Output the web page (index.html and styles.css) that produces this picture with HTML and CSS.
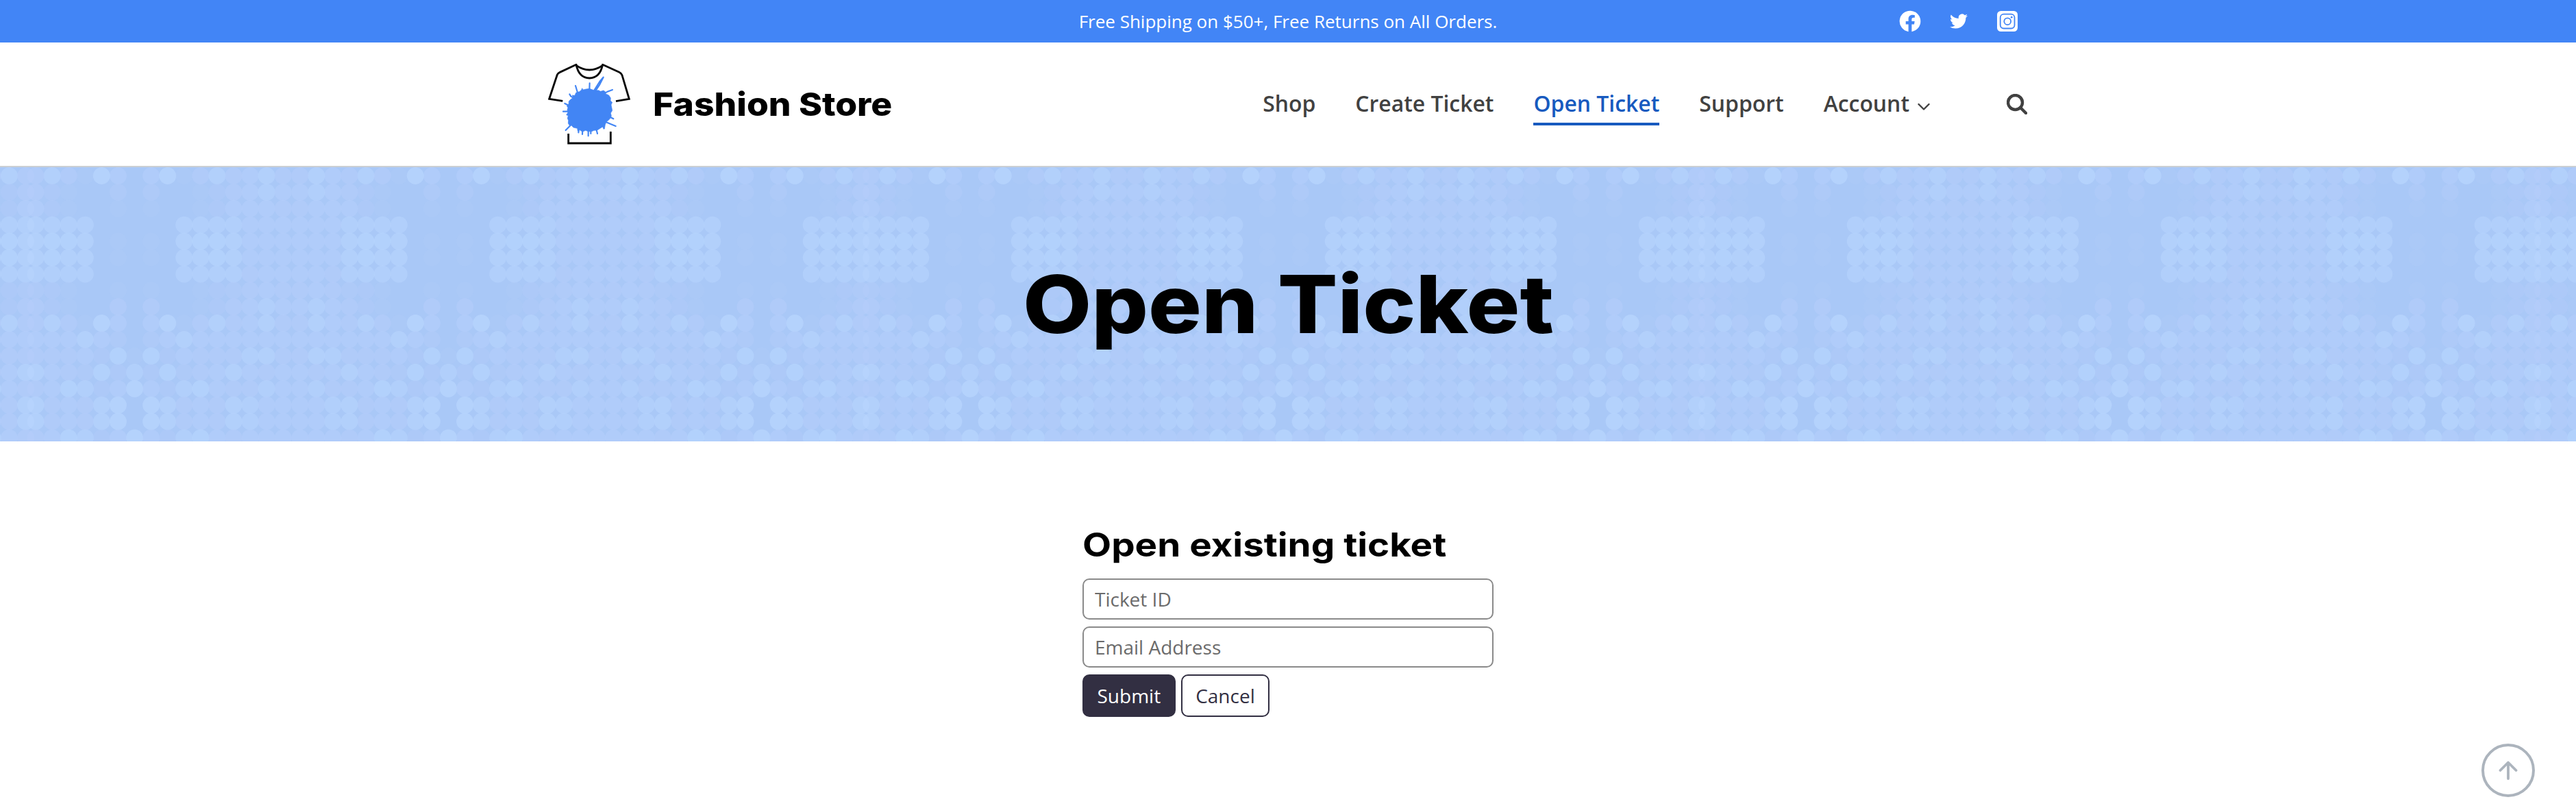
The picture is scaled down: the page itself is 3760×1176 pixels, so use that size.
FILE: index.html
```html
<!DOCTYPE html>
<html lang="en">
<head>
<meta charset="utf-8">
<title>Open Ticket – Fashion Store</title>
<link rel="stylesheet" href="styles.css">
</head>
<body>
<div class="topbar">
  <div class="container topbar-inner">
    <p class="promo">Free Shipping on $50+, Free Returns on All Orders.</p>
    <div class="social">
      <a class="social-link"><svg viewBox="0 0 24 24" width="32" height="32"><path d="M23.5 12a11.5 11.5 0 1 0-13.3 11.36v-8.04H7.28V12h2.92V9.47c0-2.88 1.72-4.48 4.34-4.48 1.26 0 2.58.23 2.58.23v2.83h-1.46c-1.43 0-1.88.89-1.88 1.8V12h3.2l-.5 3.32h-2.7v8.04A11.5 11.5 0 0 0 23.5 12z"/></svg></a>
      <a class="social-link"><svg viewBox="0 0 24 24" width="26" height="26"><path d="M24 4.56a9.8 9.8 0 0 1-2.83.78 4.94 4.94 0 0 0 2.17-2.73 9.9 9.9 0 0 1-3.13 1.2 4.92 4.92 0 0 0-8.38 4.48A13.97 13.97 0 0 1 1.67 3.15a4.92 4.92 0 0 0 1.52 6.57 4.9 4.9 0 0 1-2.23-.61v.06a4.93 4.93 0 0 0 3.95 4.83 4.9 4.9 0 0 1-2.22.08 4.93 4.93 0 0 0 4.6 3.42A9.87 9.87 0 0 1 0 19.54a13.94 13.94 0 0 0 7.55 2.21c9.05 0 14-7.5 14-13.99 0-.21 0-.42-.02-.63A10 10 0 0 0 24 4.59z"/></svg></a>
      <a class="social-link"><svg viewBox="0 0 30 30" width="30" height="30"><rect width="30" height="30" rx="5.5"/><g class="insta-lines"><rect x="4.7" y="4.7" width="20.8" height="20.8" rx="5"/><circle cx="15.2" cy="15.2" r="4.9"/></g><circle class="insta-dot" cx="21.2" cy="9.2" r="1.4"/></svg></a>
    </div>
  </div>
</div>

<header class="header">
  <div class="container header-inner">
    <a class="brand">
      <svg class="logo" viewBox="60 36 360 354" width="120" height="118">
        <g class="shirt">
          <path d="M124 199 65 190 100 84Q103 77 112 73L183 40Q195 99 241 99T299 40L371 73Q380 77 384 86L415 190 357 200"/>
          <path d="M184 44Q212 63 241 63T298 44"/>
          <path d="M149 342V384H334V333"/>
        </g>
        <path class="splash" d="M190 160 197 158 206 151 209 143 213 150 226 147 241 145 255 150 264 154 280 152 290 157 303 153 312 160 311 167 326 174 334 186 333 198 341 205 336 216 339 230 341 241 334 252 337 264 333 274 325 283 315 290 310 303 307 321 303 322 299 312 286 320 275 327 261 328 249 333 236 332 224 328 214 332 206 331 197 325 190 331 188 319 171 315 160 304 154 306 148 297 149 284 145 275 148 263 140 260 147 249 144 238 147 228 142 221 150 213 151 200 160 191 171 184 165 174 177 175 182 163Z"/>
        <path class="spikes" d="M180 132 189 162M242 121 241 150M261 154 286 114 302 95 286 127 268 154M342 150 318 159 303 170M356 309 336 301 313 291M137 327 160 304M236 352V328M126 245H150M133 210 152 219M154 169 160 179 170 185M210 345 211 325M276 342 271 322M346 277 328 268M193 337 195 322M247 342V328"/>
      </svg>
      <span class="brand-name">Fashion Store</span>
    </a>
    <nav class="nav">
      <a class="nav-link">Shop</a>
      <a class="nav-link">Create Ticket</a>
      <a class="nav-link active">Open Ticket</a>
      <a class="nav-link">Support</a>
      <a class="nav-link">Account<svg class="chevron" viewBox="0 0 18 12" width="18" height="12"><path d="M1.5 2 9 9.5 16.500 2"/></svg></a>
      <svg class="search" viewBox="0 0 30 30" width="30" height="30"><circle cx="12.500" cy="12.500" r="10.500"/><path d="M20 20 28 28"/></svg>
    </nav>
  </div>
</header>

<section class="hero">
  <svg class="hero-pattern" id="dots" width="3760" height="400"></svg>
  <h1 class="hero-title">Open Ticket</h1>
</section>

<main class="content">
  <form class="ticket-form">
    <h2 class="form-title"><span class="form-title-text">Open existing ticket</span></h2>
    <input class="field" type="text" placeholder="Ticket ID">
    <input class="field" type="email" placeholder="Email Address">
    <div class="actions">
      <button class="btn btn-primary" type="button">Submit</button>
      <button class="btn btn-outline" type="button">Cancel</button>
    </div>
  </form>
</main>

<a class="to-top"><svg viewBox="0 0 28 28" width="28" height="28"><path d="M14 26V3M2.500 14 14 2.500 25.500 14"/></svg></a>
<script src="script.js"></script>
</body>
</html>
```
FILE: styles.css
```css
* { box-sizing: border-box; }
body {
  margin: 0;
  height: 1176px;
  overflow: hidden;
  background: #fff;
  color: #000;
  font-family: "Open Sans", sans-serif;
}
.container { width: 2160px; margin: 0 auto; }

.topbar { height: 62px; background: #4285f6; color: #fff; }
.topbar-inner {
  height: 62px;
  display: grid;
  grid-template-columns: 1fr auto 1fr;
  align-items: center;
}
.promo { grid-column: 2; margin: 0; font-size: 26px; line-height: 62px; }
.social { display: flex; justify-content: flex-end; margin-right: -5px; }
.social-link { width: 71px; height: 32px; display: flex; align-items: center; justify-content: center; }
.social-link svg { fill: #fff; }
.social-link .insta-lines { fill: none; stroke: #4285f6; stroke-width: 1.8; }
.social-link .insta-dot { fill: #4285f6; }

.header { height: 182px; border-bottom: 2px solid #cbcfd4; }
.header-inner { height: 180px; display: flex; justify-content: space-between; align-items: center; }
.brand { display: flex; align-items: center; gap: 33px; }
.logo { display: block; }
.shirt { fill: none; stroke: #080808; stroke-width: 8.500; }
.splash { fill: #4285f4; stroke: #4285f4; stroke-width: 2; stroke-linejoin: round; }
.spikes { fill: none; stroke: #4285f4; stroke-width: 6.500; stroke-linecap: round; stroke-linejoin: round; }
.brand-name {
  font-family: Inter, sans-serif;
  font-weight: 800;
  font-size: 47px;
  line-height: 60px;
  transform: scaleX(1.098);
  transform-origin: left;
}
.nav { display: flex; align-items: center; padding-right: 1px; }
.nav-link {
  margin-right: 58px;
  height: 62px;
  padding-top: 4px;
  border-bottom: 4px solid transparent;
  color: #414141;
  font-size: 31.900px;
  font-weight: 600;
  line-height: 52px;
  white-space: nowrap;
}
.nav-link.active { color: #175abf; border-color: #175abf; }
.chevron { margin-left: 12px; vertical-align: 1px; fill: none; stroke: #414141; stroke-width: 2.400; stroke-linecap: round; stroke-linejoin: round; }
.search { margin-left: 54px; fill: none; stroke: #414141; stroke-width: 4.400; stroke-linecap: round; }

.hero { height: 400px; display: grid; overflow: hidden; background: #a9c8f7; }
.hero-pattern, .hero-title { grid-area: 1 / 1; }
.hero-title {
  margin: 0;
  justify-self: center;
  font-family: Inter, sans-serif;
  font-weight: 800;
  font-size: 117px;
  line-height: 400px;
  white-space: nowrap;
  transform: scaleX(1.109);
}

.content { display: flex; justify-content: center; padding-top: 118px; }
.ticket-form { width: 600px; display: flex; flex-direction: column; gap: 10px; }
.form-title {
  margin: 0;
  height: 72px;
  font-family: Inter, sans-serif;
  font-weight: 700;
  font-size: 48px;
  line-height: 66px;
  white-space: nowrap;
}
.form-title-text { display: inline-block; transform: scaleX(1.139); transform-origin: left; }
.field {
  height: 60px;
  margin: 0;
  padding: 0 16px;
  border: 2px solid #8a8a8a;
  border-radius: 10px;
  font: 28px "Open Sans", sans-serif;
}
.field::placeholder { color: #6b6b6b; }
.actions { display: flex; gap: 8px; }
.btn {
  height: 62px;
  padding: 0 19.500px;
  border: 2px solid #322f42;
  border-radius: 10px;
  font: 28px "Open Sans", sans-serif;
}
.btn-primary { background: #322f42; color: #fff; }
.btn-outline { background: #fff; color: #322f42; }

.to-top {
  position: fixed;
  right: 60px;
  bottom: 13px;
  width: 78px;
  height: 78px;
  display: grid;
  place-items: center;
  border: 4px solid #acb4bd;
  border-radius: 50%;
}
.to-top svg { fill: none; stroke: #acb4bd; stroke-width: 3.800; stroke-linecap: round; stroke-linejoin: round; }
```
FILE: script.js
```js
// Halftone backdrop: each row lists dot strength by distance from a mirror axis.
const rows = [
  "0591474574", "0300124565", "0100125554", "0006666555", "0107887555",
  "0107787555", "0006666455", "0100123454", "0400124565", "0591474574",
  "0357555555", "1825444674", "6283457545", "9526854465", "0974547655",
  "0974547655", "9526854555"
];
const pitch = 24.08;
const axes = [-107, 196.5, 654.5, 1112, 1416, 1874, 2332, 2636, 3094, 3552, 3856];
const opacity = [0, 0.17, 0.3, 0.42, 0.52, 0.56, 0.59, 0.63, 0.68, 0.74];
let dots = "";
rows.forEach((row, r) => {
  const y = 12.500 + r * 23.9;
  const put = (x, level) => {
    if (level === 0) return;
    const fill = level > 5 ? "#b7d5fd" : "#b6cefb";
    dots += `<circle cx="${x.toFixed(1)}" cy="${y.toFixed(1)}" r="12.500" fill="${fill}" fill-opacity="${opacity[level]}"/>`;
  };
  axes.forEach((axis, i) => {
    put(axis, +row[0]);
    const reach = gap => (gap < 350 ? 6 : 9);
    const left = i > 0 ? reach(axis - axes[i - 1]) : 0;
    const right = i < axes.length - 1 ? reach(axes[i + 1] - axis) : 0;
    for (let k = 1; k <= left; k++) put(axis - k * pitch, +row[k]);
    for (let k = 1; k <= right; k++) put(axis + k * pitch, +row[k]);
  });
});
document.getElementById("dots").innerHTML = dots;
```
